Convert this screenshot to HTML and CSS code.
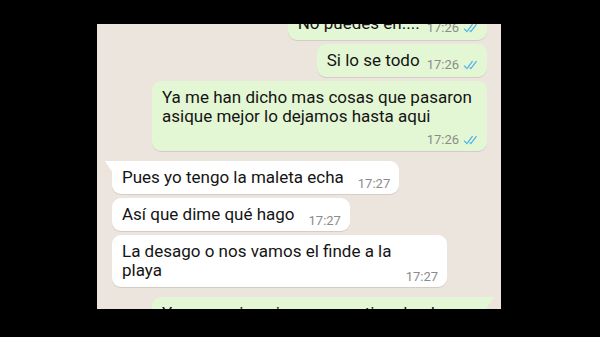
FILE: index.html
```html
<!DOCTYPE html>
<html lang="es">
<head>
    <meta charset="UTF-8">
    <meta name="viewport" content="width=device-width, initial-scale=1">
    <title>Chat</title>
    <link rel="stylesheet" href="styles.css">
</head>
<body>

    <div class="screen">
        <div class="chat">

            <div class="msg out">
                <div class="row">
                    <span class="text">No puedes en....</span>
                    <span class="meta">17:26 <svg class="ticks" viewBox="0 0 15 10"><path d="M1 5.6L3.9 8.6L9.6 1.2M6.6 7.4L7.8 8.6L13.6 1.2"/></svg></span>
                </div>
            </div>

            <div class="msg out">
                <div class="row">
                    <span class="text">Si lo se todo</span>
                    <span class="meta">17:26 <svg class="ticks" viewBox="0 0 15 10"><path d="M1 5.6L3.9 8.6L9.6 1.2M6.6 7.4L7.8 8.6L13.6 1.2"/></svg></span>
                </div>
            </div>

            <div class="msg out full">
                <p class="text">Ya me han dicho mas cosas que pasaron<br>asique mejor lo dejamos hasta aqui</p>
                <div class="meta-row">
                    <span class="meta">17:26 <svg class="ticks" viewBox="0 0 15 10"><path d="M1 5.6L3.9 8.6L9.6 1.2M6.6 7.4L7.8 8.6L13.6 1.2"/></svg></span>
                </div>
            </div>

            <!-- her messages -->
            <div class="msg in first">
                <div class="row">
                    <span class="text">Pues yo tengo la maleta echa</span>
                    <span class="meta">17:27</span>
                </div>
            </div>

            <div class="msg in">
                <div class="row">
                    <span class="text">Así que dime qué hago</span>
                    <span class="meta">17:27</span>
                </div>
            </div>

            <div class="msg in full">
                <p class="text">La desago o nos vamos el finde a la</p>
                <div class="row">
                    <span class="text">playa</span>
                    <span class="meta">17:27</span>
                </div>
            </div>

            <div class="msg out first full">
                <p class="text">Ya no se si me ire pero contigo desde</p>
            </div>

        </div>
    </div>

</body>
</html>
```

FILE: styles.css
```css
body {
    margin: 0;
    background-color: #000;
    font-family: Roboto, "Noto Sans", Arial, sans-serif;
    height: 337px;
    overflow: hidden;
}

/* Phone screen area between the black bars */
.screen {
    width: 404px;
    height: 285px;
    margin: 24px 0 0 97px;
    background-color: #ece5dd;
    overflow: hidden;
}

.chat {
    display: flex;
    flex-direction: column;
    padding: 0 14px 0 15px;
    margin-top: -21px; /* scrolled, first bubble is cut */
}

/* Bubbles */
.msg {
    position: relative;
    box-sizing: border-box;
    max-width: 335px;
    padding: 7px 9px 7px 10px;
    border-radius: 9px;
    color: #141414;
    font-size: 17px;
    line-height: 19px;
    box-shadow: 0 1px 0.5px rgba(0, 0, 0, 0.1);
    margin-top: 4px;
}

.msg.full {
    width: 335px;
}

.msg.first {
    margin-top: 10px;
}

.msg.out {
    align-self: flex-end;
    background-color: #e4f7d4;
}

.msg.in {
    align-self: flex-start;
    background-color: #fff;
}

/* little tail on the first bubble of a group */
.msg.in.first {
    border-top-left-radius: 0;
}

.msg.in.first::before {
    content: "";
    position: absolute;
    top: 0;
    left: -7px;
    width: 8px;
    height: 12px;
    background-color: #fff;
    clip-path: polygon(0 0, 100% 0, 100% 100%);
}

.msg.out.first {
    border-top-right-radius: 0;
}

.msg.out.first::before {
    content: "";
    position: absolute;
    top: 0;
    right: -7px;
    width: 8px;
    height: 12px;
    background-color: #e4f7d4;
    clip-path: polygon(0 0, 100% 0, 0 100%);
}

.text {
    margin: 0;
    white-space: nowrap;
}

.row {
    display: flex;
    align-items: flex-end;
    justify-content: space-between;
}

.meta-row {
    display: flex;
    justify-content: flex-end;
    margin-top: 7px;
    margin-bottom: -3px;
}

.meta {
    display: flex;
    align-items: center;
    gap: 4px;
    font-size: 13px;
    line-height: 14px;
    color: #8b8b8b;
    white-space: nowrap;
}

.row .meta {
    margin: 0 0 -4px 14px;
}

.out .row .meta {
    margin: 0 0 -2px 7px;
}

.ticks {
    width: 15px;
    height: 10px;
    fill: none;
    stroke: #4fb3e8;
    stroke-width: 1.3;
}
```
